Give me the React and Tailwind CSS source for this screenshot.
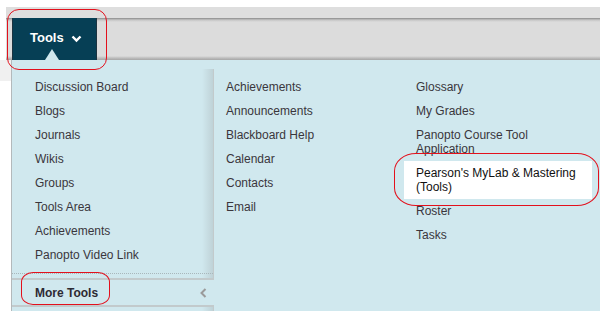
import React from "react";

const leftTools = [
  "Discussion Board",
  "Blogs",
  "Journals",
  "Wikis",
  "Groups",
  "Tools Area",
  "Achievements",
  "Panopto Video Link",
];

const midTools = ["Achievements", "Announcements", "Blackboard Help", "Calendar", "Contacts", "Email"];

const rightTools = [
  { label: "Glossary" },
  { label: "My Grades" },
  { label: "Panopto Course Tool Application" },
  { label: "Pearson's MyLab & Mastering (Tools)", active: true },
  { label: "Roster" },
  { label: "Tasks" },
];

const App = () => {
  return (
    <div className="relative w-[607px] h-[317px] bg-white overflow-hidden font-['Liberation_Sans',Arial,sans-serif] text-[12px] text-[#3a363c]">
      {/* TOP BAR */}
      <div className="pt-[7px] pl-[6px]">
        <div className="w-[594px] h-[11px] bg-[#dedede]" />
        <div className="w-[594px] h-[42px] pl-[6px] flex bg-[linear-gradient(to_bottom,#8a8a8a_0px,#c6c6c6_2px,#dcdcdc_4px,#dcdcdc_38px,#bdbdbd_40px,#a6a6a6_42px)]">
          <div className="relative w-[85px] h-full bg-[#063f55] border-x border-[#1c3340] flex items-start pt-[12px] pl-[17px] gap-[7px]">
            <span className="text-[13px] font-bold text-white leading-[16px]">Tools</span>
            <svg width="11" height="8" viewBox="0 0 11 8" className="mt-[5px]">
              <polyline points="1.5,1.5 5.5,5.5 9.5,1.5" fill="none" stroke="#fff" strokeWidth="2.4" />
            </svg>
            <div className="absolute bottom-0 left-[32px] w-0 h-0 border-x-[7px] border-x-transparent border-b-[11px] border-b-[#d0e8ee]" />
          </div>
        </div>
      </div>

      {/* MENU BODY */}
      <div className="flex h-[251px]">
        <div className="w-[11px]">
          <div className="h-[21px] bg-[#f0f0f0]" />
        </div>
        <div className="w-[589px] bg-[#d0e8ee] border-l border-[#b3b9bb] flex">
          {/* LEFT PANEL */}
          <div className="w-[202px] flex flex-col">
            <div className="mt-[9px] pt-[11px] border-r border-b-2 border-[#c2cacc] bg-[linear-gradient(to_right,transparent_190px,#bfd2d7_201px)]">
              <div className="pl-[23px] flex flex-col gap-[10px] leading-[14px]">
                {leftTools.map((t) => (
                  <div key={t}>{t}</div>
                ))}
              </div>
              <div className="mt-[11px] mb-[4px] border-t border-dotted border-[#a9b7bb]" />
            </div>
            <div className="h-[25px] flex items-center justify-between pl-[23px] pr-[7px]">
              <span className="font-bold text-[#2d2a33]">More Tools</span>
              <svg width="7" height="10" viewBox="0 0 7 10">
                <polyline points="5.5,1 1.5,5 5.5,9" fill="none" stroke="#9a9a9a" strokeWidth="2" />
              </svg>
            </div>
            <div className="flex-1 border-t-2 border-r border-[#c2cacc] bg-[linear-gradient(to_right,transparent_190px,#bfd2d7_201px)]" />
          </div>

          {/* MIDDLE COLUMN */}
          <div className="ml-[12px] w-[190px] pt-[20px] flex flex-col gap-[10px] leading-[14px]">
            {midTools.map((t) => (
              <div key={t}>{t}</div>
            ))}
          </div>

          {/* RIGHT COLUMN */}
          <div className="w-[168px] pt-[20px] flex flex-col gap-[10px] leading-[14px]">
            {rightTools.map((t) =>
              t.active ? (
                <div key={t.label} className="-ml-[12px] -mr-[8px] pl-[12px] pr-[8px] -my-[5px] py-[5px] bg-white text-[#111]">
                  {t.label}
                </div>
              ) : (
                <div key={t.label}>{t.label}</div>
              )
            )}
          </div>
        </div>
      </div>

      {/* RED ANNOTATIONS */}
      <div className="absolute left-[7px] top-[9px] w-[100px] h-[61px] border border-[#e3101c] rounded-[12px]" />
      <div className="absolute left-[21px] top-[272px] w-[89px] h-[33px] border border-[#e3101c] rounded-[12px/10px]" />
      <div className="absolute left-[394px] top-[153px] w-[205px] h-[53px] border border-[#e3101c] rounded-[22px/18px]" />
    </div>
  );
};

export default App;
